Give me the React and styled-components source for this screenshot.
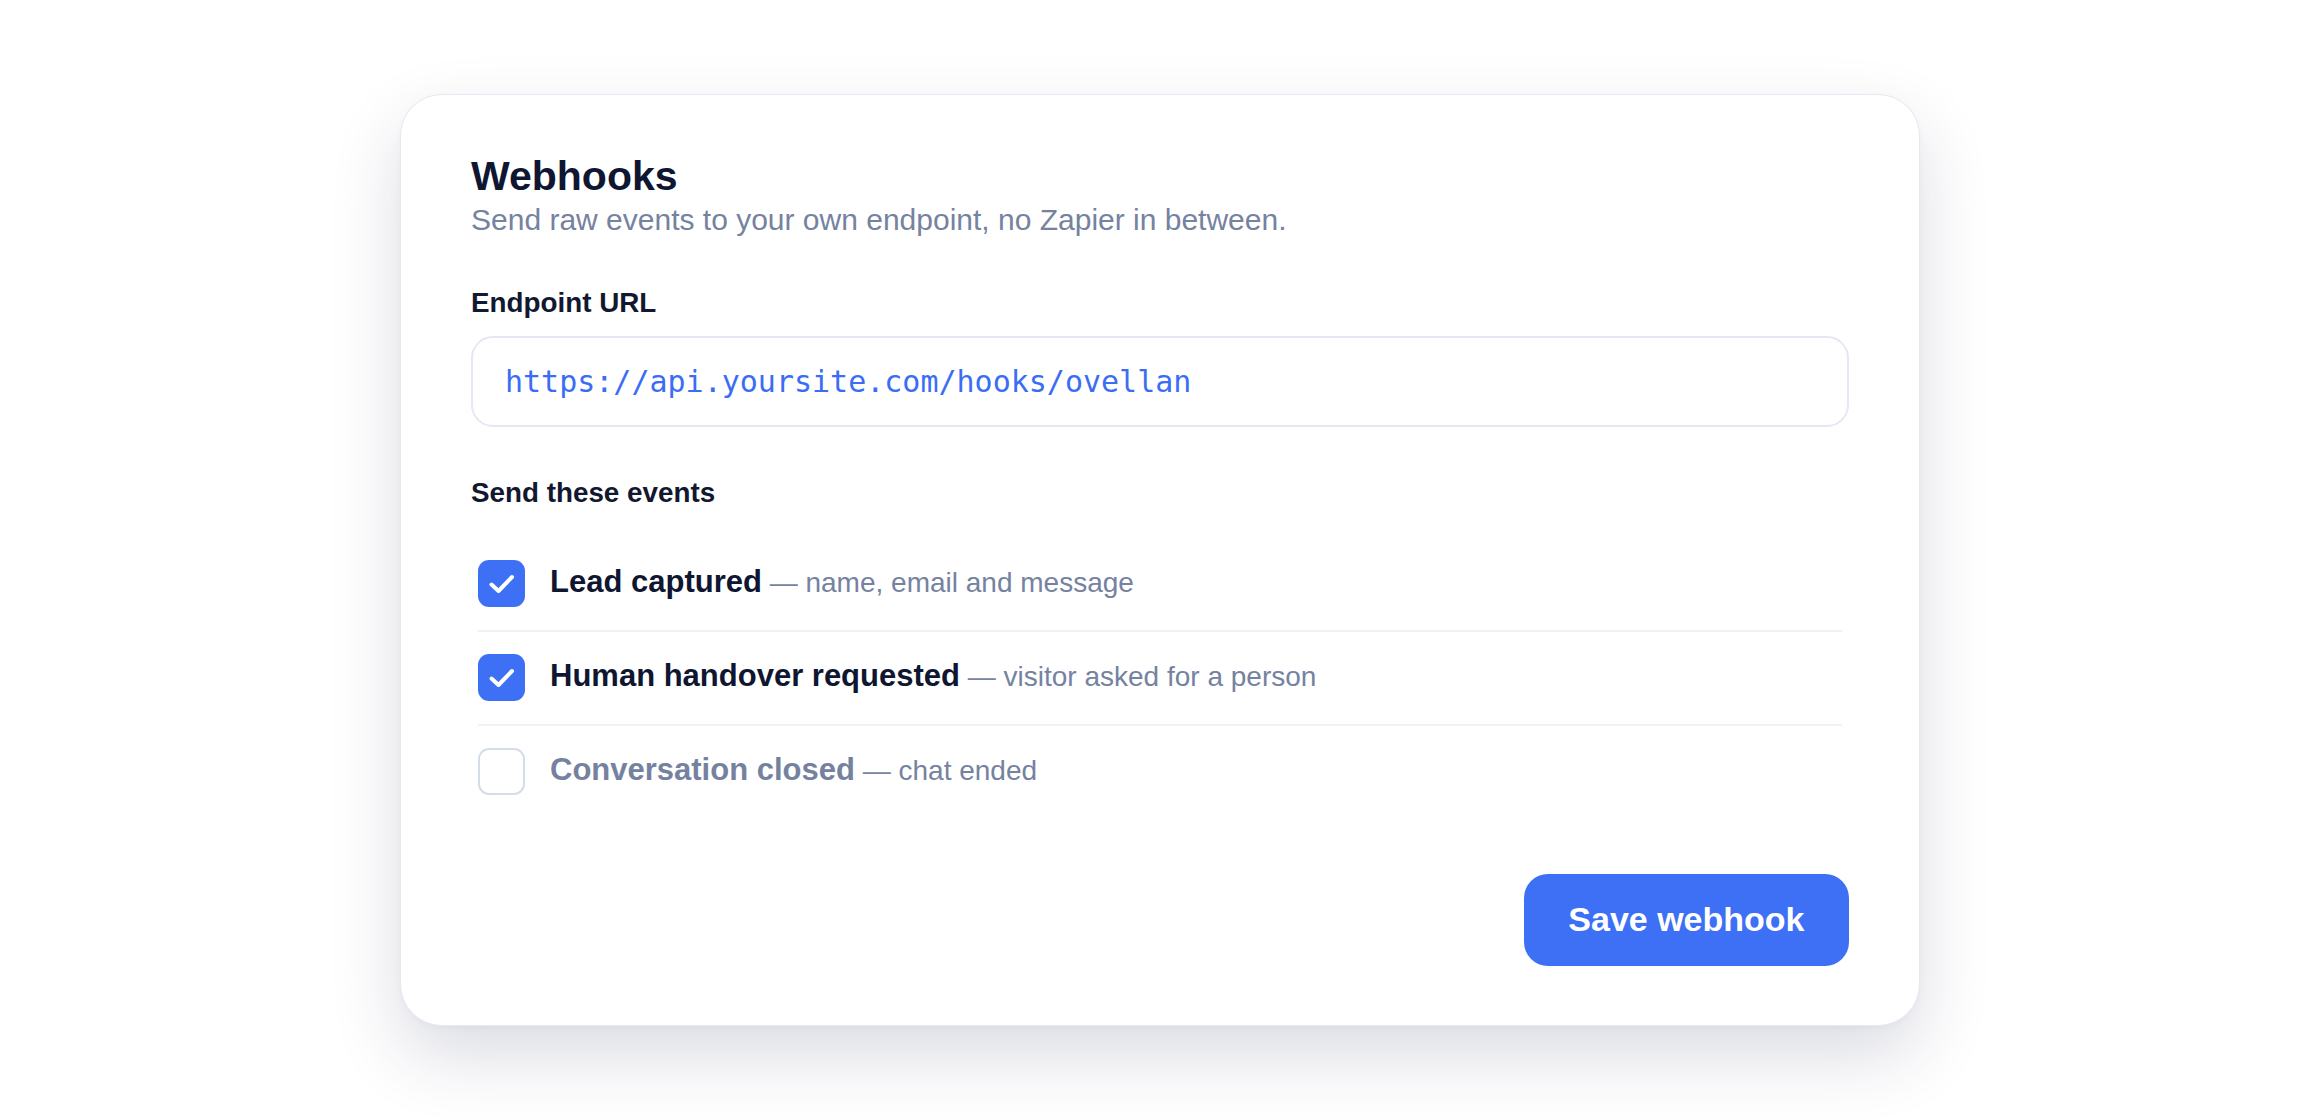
import React, { useState } from "react";
import styled, { createGlobalStyle } from "styled-components";

const GlobalStyle = createGlobalStyle`
  * {
    box-sizing: border-box;
  }
  html, body {
    margin: 0;
    padding: 0;
    background: #ffffff;
  }
  body {
    font-family: "Liberation Sans", Arial, sans-serif;
  }
`;

const Page = styled.div`
  min-height: 100vh;
  display: flex;
  align-items: center;
  justify-content: center;
`;

const Card = styled.section`
  width: 1520px;
  background: #ffffff;
  border: 1px solid #e6e9f2;
  border-radius: 42px;
  padding: 57px 70px 59px;
  box-shadow: 0 30px 70px rgba(28, 38, 80, 0.16), 0 2px 6px rgba(28, 38, 80, 0.03);
  display: flex;
  flex-direction: column;
`;

const Title = styled.h1`
  margin: 0;
  font-size: 41px;
  line-height: 1.2;
  font-weight: 700;
  color: #0f1631;
`;

const Subtitle = styled.p`
  margin: 0;
  font-size: 30px;
  line-height: 1.2;
  color: #7582a0;
`;

const FieldLabel = styled.div`
  margin-top: ${(p) => p.$top}px;
  font-size: 27.8px;
  line-height: 1.2;
  font-weight: 700;
  color: #111830;
`;

const UrlInput = styled.input`
  display: block;
  width: 100%;
  height: 91px;
  margin-top: 17px;
  padding: 0 32px;
  border: 2px solid #e3e8f3;
  border-radius: 22px;
  background: #ffffff;
  font-family: "DejaVu Sans Mono", "Liberation Mono", monospace;
  font-size: 30px;
  color: #3b6df4;
  outline: none;
`;

const EventList = styled.ul`
  list-style: none;
  margin: 28.5px 7px 0;
  padding: 0;
`;

const EventRow = styled.li`
  display: flex;
  align-items: center;
  gap: 25px;
  padding: 22.5px 0;
  border-bottom: 2px solid #eef1f6;
  cursor: pointer;

  &:last-child {
    border-bottom: none;
  }
`;

const Box = styled.span`
  flex: 0 0 47px;
  width: 47px;
  height: 47px;
  border-radius: 11px;
  display: flex;
  align-items: center;
  justify-content: center;
  background: ${(p) => (p.$checked ? "#3d70f5" : "#ffffff")};
  border: ${(p) => (p.$checked ? "none" : "2px solid #d5dcea")};
`;

const EventText = styled.span`
  margin-top: -4px;
  font-size: 28px;
  line-height: 1.2;
  color: #7582a0;
  white-space: nowrap;
`;

const EventName = styled.strong`
  font-size: 31px;
  font-weight: 700;
  color: ${(p) => (p.$checked ? "#0f1631" : "#75829f")};
`;

const Footer = styled.div`
  display: flex;
  justify-content: flex-end;
  margin-top: 56px;
`;

const SaveButton = styled.button`
  height: 92px;
  padding: 0 44.5px;
  border: none;
  border-radius: 24px;
  background: #3d70f5;
  color: #ffffff;
  font-family: "Liberation Sans", Arial, sans-serif;
  font-size: 34px;
  font-weight: 700;
  cursor: pointer;
`;

const CheckMark = () => (
  <svg width="47" height="47" viewBox="0 0 47 47" fill="none">
    <polyline
      points="13.5,24.5 20.5,31 34,17"
      stroke="#ffffff"
      strokeWidth="4"
      strokeLinecap="round"
      strokeLinejoin="round"
    />
  </svg>
);

const initialEvents = [
  { id: "lead", name: "Lead captured", hint: "name, email and message", on: true },
  { id: "handover", name: "Human handover requested", hint: "visitor asked for a person", on: true },
  { id: "closed", name: "Conversation closed", hint: "chat ended", on: false },
];

export default function App() {
  const [events, setEvents] = useState(initialEvents);

  const toggle = (id) =>
    setEvents((list) => list.map((e) => (e.id === id ? { ...e, on: !e.on } : e)));

  return (
    <Page>
      <GlobalStyle />
      <Card>
        <Title>Webhooks</Title>
        <Subtitle>Send raw events to your own endpoint, no Zapier in between.</Subtitle>

        <FieldLabel $top={48}>Endpoint URL</FieldLabel>
        <UrlInput defaultValue="https://api.yoursite.com/hooks/ovellan" spellCheck={false} />

        <FieldLabel $top={49}>Send these events</FieldLabel>
        <EventList>
          {events.map((e) => (
            <EventRow key={e.id} onClick={() => toggle(e.id)}>
              <Box $checked={e.on}>{e.on && <CheckMark />}</Box>
              <EventText>
                <EventName $checked={e.on}>{e.name}</EventName> — {e.hint}
              </EventText>
            </EventRow>
          ))}
        </EventList>

        <Footer>
          <SaveButton>Save webhook</SaveButton>
        </Footer>
      </Card>
    </Page>
  );
}
